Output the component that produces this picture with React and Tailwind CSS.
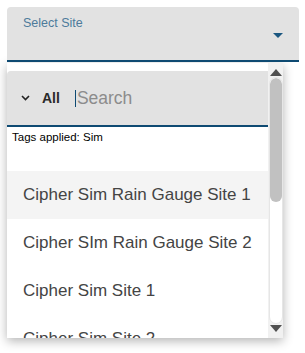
import React from 'react';

const SITES = [
  'Cipher Sim Rain Gauge Site 1',
  'Cipher SIm Rain Gauge Site 2',
  'Cipher Sim Site 1',
  'Cipher Sim Site 2',
];

export default function App() {
  return (
    <div className="w-[305px] h-[353px] bg-white overflow-hidden font-['Liberation_Sans',Arial,sans-serif]">
      {/* Select field */}
      <div className="ml-[7px] mt-[7px] w-[292px] h-[55px] bg-[#e2e2e2] rounded-t-[4px] border-b-2 border-[#0e4a72] relative">
        <div className="pl-[16px] pt-[8px] text-[12.5px] leading-[16px] text-[#4d7b9b]">Select Site</div>
        <svg className="absolute right-[16px] top-[26px]" width="10" height="5" viewBox="0 0 10 5">
          <path d="M0 0 L10 0 L5 5 Z" fill="#1b5780" />
        </svg>
      </div>

      {/* Dropdown panel */}
      <div className="ml-[7px] mt-px w-[276px] h-[275px] bg-white flex shadow-[0_3px_10px_rgba(0,0,0,0.3)]">
        <div className="flex-1 overflow-hidden pt-[8px]">
          <div className="h-[56px] bg-[#e2e2e2] rounded-tl-[4px] border-b-2 border-[#0e4a72] flex items-center">
            <svg className="ml-[14px]" width="9" height="6" viewBox="0 0 9 6">
              <path d="M1 1 L4.5 4.5 L8 1" fill="none" stroke="#222" strokeWidth="1.6" />
            </svg>
            <span className="ml-[12px] text-[14px] font-bold text-[#2a2a2a]">All</span>
            <span className="ml-[15px] w-px h-[17px] bg-[#0e4a72]" />
            <span className="ml-px text-[17.5px] text-[#8c8c8c]">Search</span>
          </div>
          <div className="h-[44px] pl-[5px] pt-[2px] text-[11.5px] leading-[16px] text-black">Tags applied: Sim</div>
          <div className="flex flex-col">
            {SITES.map((s, i) => (
              <div
                key={s}
                className={`h-[48px] shrink-0 flex items-center pl-[16px] text-[17px] text-[#444] whitespace-nowrap ${i === 0 ? 'bg-[#f4f4f4]' : ''}`}
              >
                {s}
              </div>
            ))}
          </div>
        </div>

        {/* Scrollbar */}
        <div className="w-[15px] bg-[#f1f1f1] flex flex-col items-center">
          <div className="h-[13px] flex items-end justify-center">
            <svg width="12" height="7" viewBox="0 0 12 7">
              <path d="M0 7 L6 0 L12 7 Z" fill="#505050" />
            </svg>
          </div>
          <div className="flex-1 w-[14px] my-[1px] rounded-full bg-white border border-[#e6e6e6] overflow-hidden">
            <div className="h-[124px] bg-[#c1c1c1] rounded-full" />
          </div>
          <div className="h-[13px] flex items-start justify-center">
            <svg width="12" height="7" viewBox="0 0 12 7">
              <path d="M0 0 L12 0 L6 7 Z" fill="#505050" />
            </svg>
          </div>
        </div>
      </div>
    </div>
  );
}
